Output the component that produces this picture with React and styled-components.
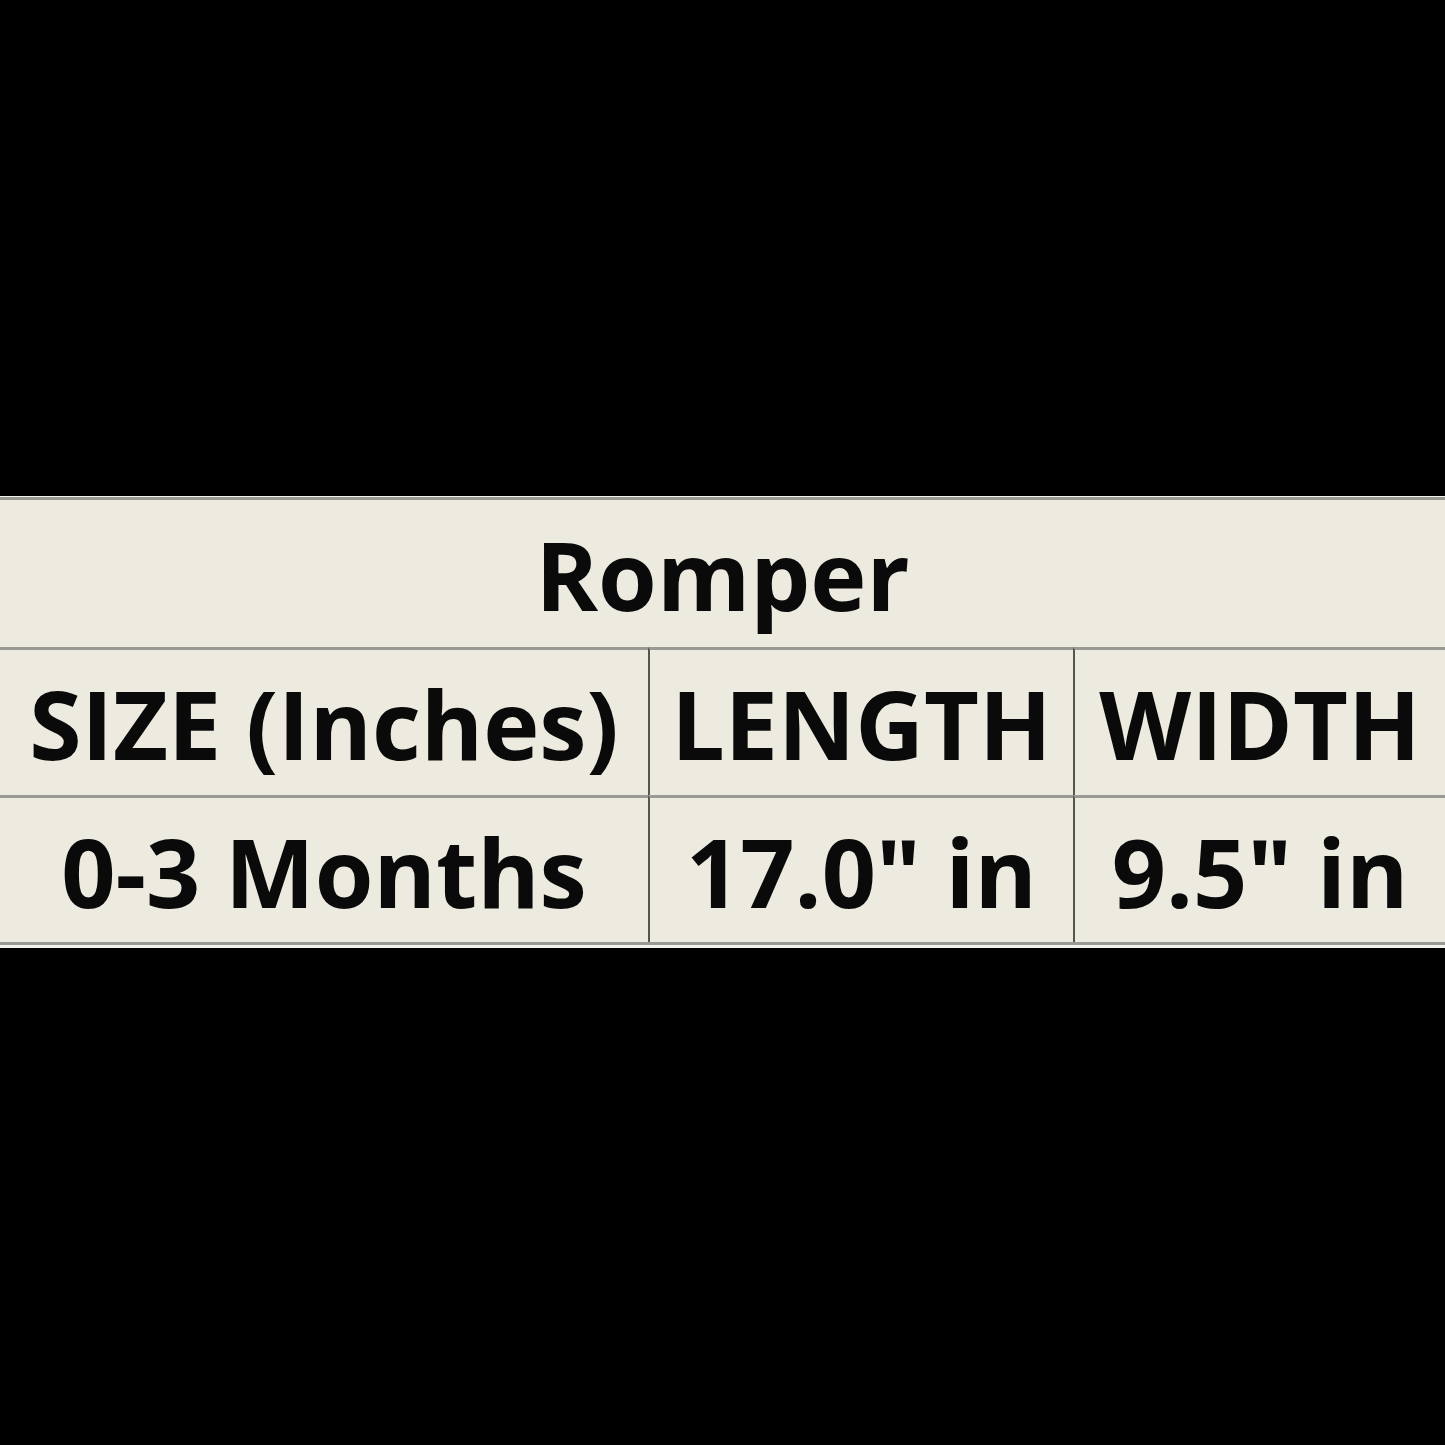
import React from "react";
import styled, { createGlobalStyle } from "styled-components";

const Global = createGlobalStyle`
  html, body { margin: 0; padding: 0; background: #000; }
  body { font-family: "Open Sans", "Lato", sans-serif; }
`;

const Page = styled.div`
  width: 1445px;
  height: 1445px;
  background: #000;
  display: flex;
  flex-direction: column;
  padding-top: 496px;
  box-sizing: border-box;
`;

const Table = styled.div`
  background: #edeae0;
  border-top: 1px solid #f4f3ee;
  border-bottom: 3px solid #f2f1ec;
  display: grid;
  grid-template-columns: 648px 425px 1fr;
`;

const Cell = styled.div`
  grid-column: ${(p) => (p.$span ? "1 / -1" : "auto")};
  height: ${(p) => p.$h}px;
  display: flex;
  align-items: center;
  justify-content: center;
  border-top: 3px solid #9a9a94;
  border-left: ${(p) => (p.$first ? "none" : "2px solid #55554f")};
  box-sizing: border-box;
  font-weight: 700;
  font-size: 95px;
  color: #0a0a0a;
  white-space: nowrap;
  padding-top: ${(p) => p.$pt || 0}px;
`;

const Last = styled.div`
  grid-column: 1 / -1;
  height: 3px;
  background: #9a9a94;
`;

export default function App() {
  return (
    <Page>
      <Global />
      <Table>
        <Cell $span $first $h={150}>Romper</Cell>
        <Cell $first $h={148}>SIZE (Inches)</Cell>
        <Cell $h={148}>LENGTH</Cell>
        <Cell $h={148}>WIDTH</Cell>
        <Cell $first $h={147} $pt={2}>0-3 Months</Cell>
        <Cell $h={147} $pt={2}>17.0" in</Cell>
        <Cell $h={147} $pt={2}>9.5" in</Cell>
        <Last />
      </Table>
    </Page>
  );
}
